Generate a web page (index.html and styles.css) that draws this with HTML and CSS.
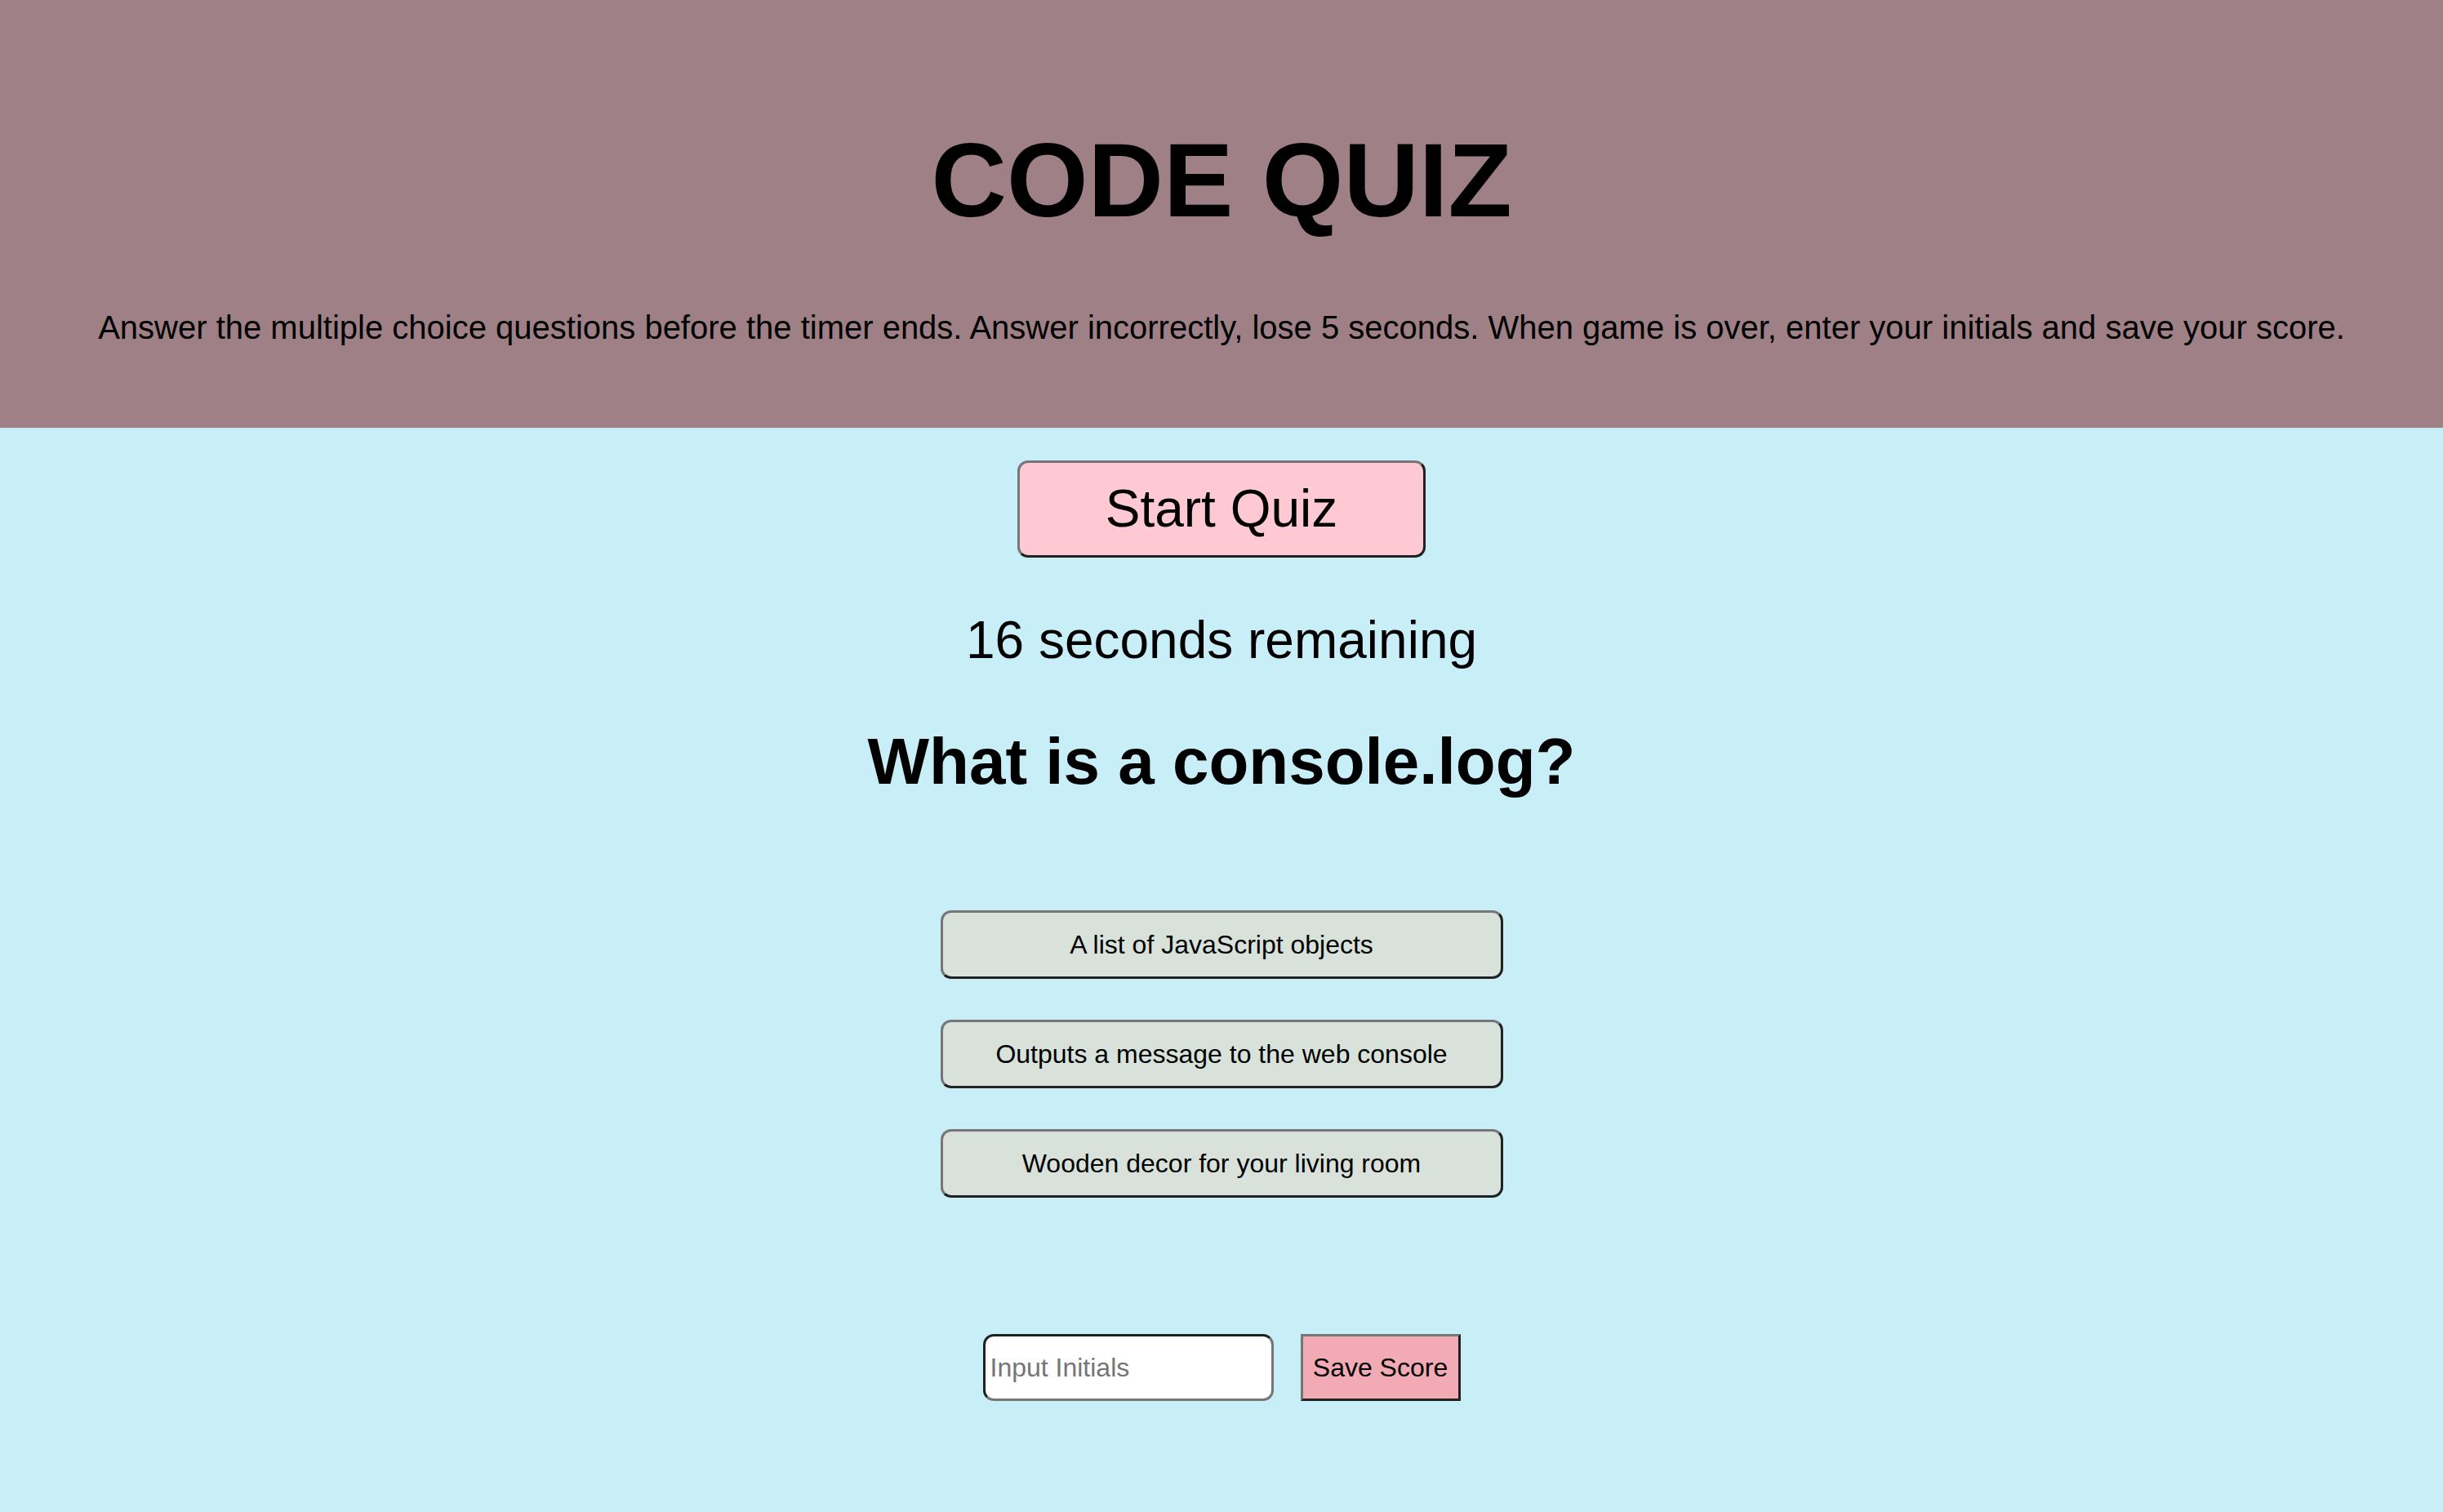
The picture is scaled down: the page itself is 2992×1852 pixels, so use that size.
FILE: index.html
```html
<!DOCTYPE html>
<html lang="en">
<head>
<meta charset="utf-8">
<title>Code Quiz</title>
<link rel="stylesheet" href="styles.css">
</head>
<body>
<header class="hero">
  <h1 class="hero-title">CODE QUIZ</h1>
  <p class="hero-text">Answer the multiple choice questions before the timer ends. Answer incorrectly, lose 5 seconds. When game is over, enter your initials and save your score.</p>
</header>
<main class="quiz">
  <button class="start-btn" type="button">Start Quiz</button>
  <p class="timer">16 seconds remaining</p>
  <h2 class="question">What is a console.log?</h2>
  <div class="answers">
    <button class="answer-btn" type="button">A list of JavaScript objects</button>
    <button class="answer-btn" type="button">Outputs a message to the web console</button>
    <button class="answer-btn" type="button">Wooden decor for your living room</button>
  </div>
  <form class="score-form">
    <input class="initials" type="text" placeholder="Input Initials">
    <button class="save-btn" type="button">Save Score</button>
  </form>
</main>
</body>
</html>
```
FILE: styles.css
```css
html {
  background: #c8eef7;
}
body {
  margin: 0;
  font-family: "Liberation Sans", Arial, sans-serif;
  color: #000;
  background: #c8eef7;
  min-height: 1852px;
}
.hero {
  background: #9f8087;
  padding: 144px 0 99px;
  text-align: center;
}
.hero-title {
  margin: 0;
  font-size: 128px;
  line-height: 1.2;
  font-weight: bold;
}
.hero-text {
  margin: 79px 0 0;
  font-size: 40px;
  line-height: 1.2;
}
.quiz {
  display: flex;
  flex-direction: column;
  align-items: center;
  padding-top: 40px;
}
.start-btn {
  box-sizing: border-box;
  width: 500px;
  height: 119px;
  font-family: inherit;
  font-size: 64px;
  color: #000;
  background: #ffc9d3;
  border: 3px outset #767676;
  border-radius: 13px;
  padding: 0;
}
.timer {
  margin: 63px 0 0;
  font-size: 64px;
  line-height: 1.2;
}
.question {
  margin: 63px 0 0;
  font-size: 80px;
  line-height: 1.2;
  font-weight: bold;
}
.answers {
  display: flex;
  flex-direction: column;
  gap: 50px;
  margin-top: 134px;
}
.answer-btn {
  box-sizing: border-box;
  width: 689px;
  height: 84px;
  font-family: inherit;
  font-size: 32px;
  color: #000;
  background: #d9e2da;
  border: 3px outset #767676;
  border-radius: 13px;
  padding: 0;
}
.score-form {
  display: flex;
  gap: 33px;
  margin: 167px 0 0;
}
.initials {
  box-sizing: border-box;
  width: 356px;
  height: 82px;
  font-family: inherit;
  font-size: 32px;
  padding: 0 6px;
  background: #fff;
  border: 3px inset #767676;
  border-radius: 13px;
}
.initials::placeholder {
  color: #757575;
}
.save-btn {
  box-sizing: border-box;
  width: 196px;
  height: 82px;
  font-family: inherit;
  font-size: 32px;
  color: #000;
  background: #f2aab4;
  border: 3px outset #767676;
  border-radius: 0;
  padding: 0;
}
```
